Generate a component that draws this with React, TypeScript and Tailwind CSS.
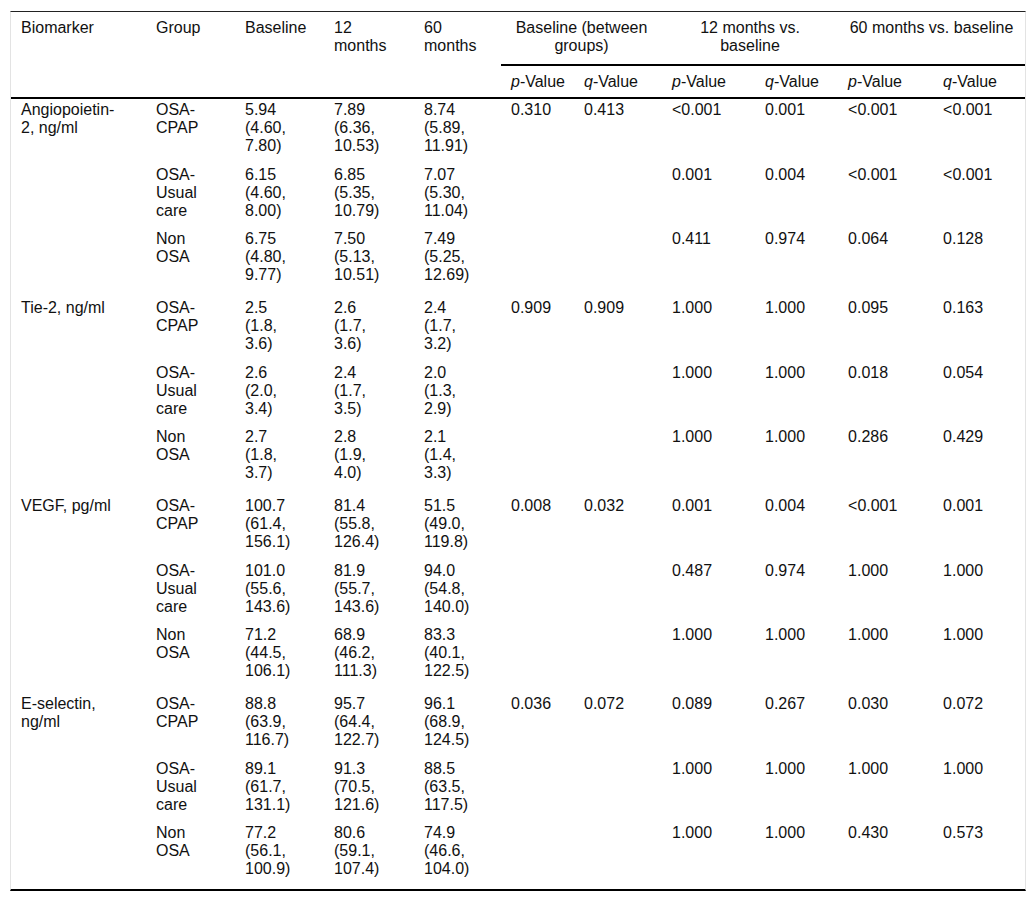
type Row = {
  biomarker?: string[];
  group: string[];
  base: string;
  m12: string;
  m60: string;
  pBase?: string;
  qBase?: string;
  p12: string;
  q12: string;
  p60: string;
  q60: string;
};

const CPAP = ['OSA-', 'CPAP'];
const USUAL = ['OSA-', 'Usual', 'care'];
const NON = ['Non', 'OSA'];

const rows: Row[] = [
  { biomarker: ['Angiopoietin-', '2, ng/ml'], group: CPAP, base: '5.94 (4.60, 7.80)', m12: '7.89 (6.36, 10.53)', m60: '8.74 (5.89, 11.91)', pBase: '0.310', qBase: '0.413', p12: '<0.001', q12: '0.001', p60: '<0.001', q60: '<0.001' },
  { group: USUAL, base: '6.15 (4.60, 8.00)', m12: '6.85 (5.35, 10.79)', m60: '7.07 (5.30, 11.04)', p12: '0.001', q12: '0.004', p60: '<0.001', q60: '<0.001' },
  { group: NON, base: '6.75 (4.80, 9.77)', m12: '7.50 (5.13, 10.51)', m60: '7.49 (5.25, 12.69)', p12: '0.411', q12: '0.974', p60: '0.064', q60: '0.128' },
  { biomarker: ['Tie-2, ng/ml'], group: CPAP, base: '2.5 (1.8, 3.6)', m12: '2.6 (1.7, 3.6)', m60: '2.4 (1.7, 3.2)', pBase: '0.909', qBase: '0.909', p12: '1.000', q12: '1.000', p60: '0.095', q60: '0.163' },
  { group: USUAL, base: '2.6 (2.0, 3.4)', m12: '2.4 (1.7, 3.5)', m60: '2.0 (1.3, 2.9)', p12: '1.000', q12: '1.000', p60: '0.018', q60: '0.054' },
  { group: NON, base: '2.7 (1.8, 3.7)', m12: '2.8 (1.9, 4.0)', m60: '2.1 (1.4, 3.3)', p12: '1.000', q12: '1.000', p60: '0.286', q60: '0.429' },
  { biomarker: ['VEGF, pg/ml'], group: CPAP, base: '100.7 (61.4, 156.1)', m12: '81.4 (55.8, 126.4)', m60: '51.5 (49.0, 119.8)', pBase: '0.008', qBase: '0.032', p12: '0.001', q12: '0.004', p60: '<0.001', q60: '0.001' },
  { group: USUAL, base: '101.0 (55.6, 143.6)', m12: '81.9 (55.7, 143.6)', m60: '94.0 (54.8, 140.0)', p12: '0.487', q12: '0.974', p60: '1.000', q60: '1.000' },
  { group: NON, base: '71.2 (44.5, 106.1)', m12: '68.9 (46.2, 111.3)', m60: '83.3 (40.1, 122.5)', p12: '1.000', q12: '1.000', p60: '1.000', q60: '1.000' },
  { biomarker: ['E-selectin,', 'ng/ml'], group: CPAP, base: '88.8 (63.9, 116.7)', m12: '95.7 (64.4, 122.7)', m60: '96.1 (68.9, 124.5)', pBase: '0.036', qBase: '0.072', p12: '0.089', q12: '0.267', p60: '0.030', q60: '0.072' },
  { group: USUAL, base: '89.1 (61.7, 131.1)', m12: '91.3 (70.5, 121.6)', m60: '88.5 (63.5, 117.5)', p12: '1.000', q12: '1.000', p60: '1.000', q60: '1.000' },
  { group: NON, base: '77.2 (56.1, 100.9)', m12: '80.6 (59.1, 107.4)', m60: '74.9 (46.6, 104.0)', p12: '1.000', q12: '1.000', p60: '0.430', q60: '0.573' },
];

// padding per sub-row inside a biomarker block; the very last row is a bit shorter
const rowPad = ['pt-[2px] pb-[9px]', 'pt-[2px] pb-[8px]', 'pt-[2px] pb-[13px]'];
const lastPad = 'pt-[2px] pb-[11px]';

function Lines({ lines }: { lines: string[] }) {
  return (
    <>
      {lines.map((l, i) => (
        <span key={i} className="block">{l}</span>
      ))}
    </>
  );
}

const PV = () => (<><i>p</i>-Value</>);
const QV = () => (<><i>q</i>-Value</>);

export default function App() {
  const th = 'text-left font-normal align-top whitespace-nowrap px-[10px]';
  const sub = `${th} pt-[7px] pb-[6px] border-b-2 border-black`;
  const group = 'font-normal text-center align-top whitespace-nowrap px-[10px] pt-[7px] pb-[9px] border-b-2 border-black';
  return (
    <div className="min-h-screen bg-white pt-[11px] pl-[10px] font-['Liberation_Sans',Arial,sans-serif] text-[16px] leading-[18px] text-[#111]">
      <div className="w-[1016px] border-x border-[#e3e3e3] border-t border-t-[#222] border-b-2 border-b-black">
        <table className="w-full table-fixed border-separate border-spacing-0">
          <colgroup>
            <col className="w-[135px]" />
            <col className="w-[89px]" />
            <col className="w-[89px]" />
            <col className="w-[90px]" />
            <col className="w-[87px]" />
            <col className="w-[73px]" />
            <col className="w-[88px]" />
            <col className="w-[93px]" />
            <col className="w-[83px]" />
            <col className="w-[95px]" />
            <col className="w-[92px]" />
          </colgroup>
          <thead>
            <tr>
              <th rowSpan={2} className={`${th} pt-[7px] border-b-2 border-black`}>Biomarker</th>
              <th rowSpan={2} className={`${th} pt-[7px] border-b-2 border-black`}>Group</th>
              <th rowSpan={2} className={`${th} pt-[7px] border-b-2 border-black`}>Baseline</th>
              <th rowSpan={2} className={`${th} pt-[7px] border-b-2 border-black`}><Lines lines={['12', 'months']} /></th>
              <th rowSpan={2} className={`${th} pt-[7px] border-b-2 border-black`}><Lines lines={['60', 'months']} /></th>
              <th colSpan={2} className={group}><Lines lines={['Baseline (between', 'groups)']} /></th>
              <th colSpan={2} className={group}><Lines lines={['12 months vs.', 'baseline']} /></th>
              <th colSpan={2} className={group}>60 months vs. baseline</th>
            </tr>
            <tr>
              <th className={sub}><PV /></th>
              <th className={sub}><QV /></th>
              <th className={sub}><PV /></th>
              <th className={sub}><QV /></th>
              <th className={sub}><PV /></th>
              <th className={sub}><QV /></th>
            </tr>
          </thead>
          <tbody>
            {rows.map((r, i) => {
              const pad = i === rows.length - 1 ? lastPad : rowPad[i % 3];
              const td = `align-top whitespace-nowrap px-[10px] ${pad}`;
              return (
                <tr key={i}>
                  <td className={td}>{r.biomarker && <Lines lines={r.biomarker} />}</td>
                  <td className={td}><Lines lines={r.group} /></td>
                  <td className={td}><Lines lines={r.base.split(' ')} /></td>
                  <td className={td}><Lines lines={r.m12.split(' ')} /></td>
                  <td className={td}><Lines lines={r.m60.split(' ')} /></td>
                  <td className={td}>{r.pBase}</td>
                  <td className={td}>{r.qBase}</td>
                  <td className={td}>{r.p12}</td>
                  <td className={td}>{r.q12}</td>
                  <td className={td}>{r.p60}</td>
                  <td className={td}>{r.q60}</td>
                </tr>
              );
            })}
          </tbody>
        </table>
      </div>
    </div>
  );
}
